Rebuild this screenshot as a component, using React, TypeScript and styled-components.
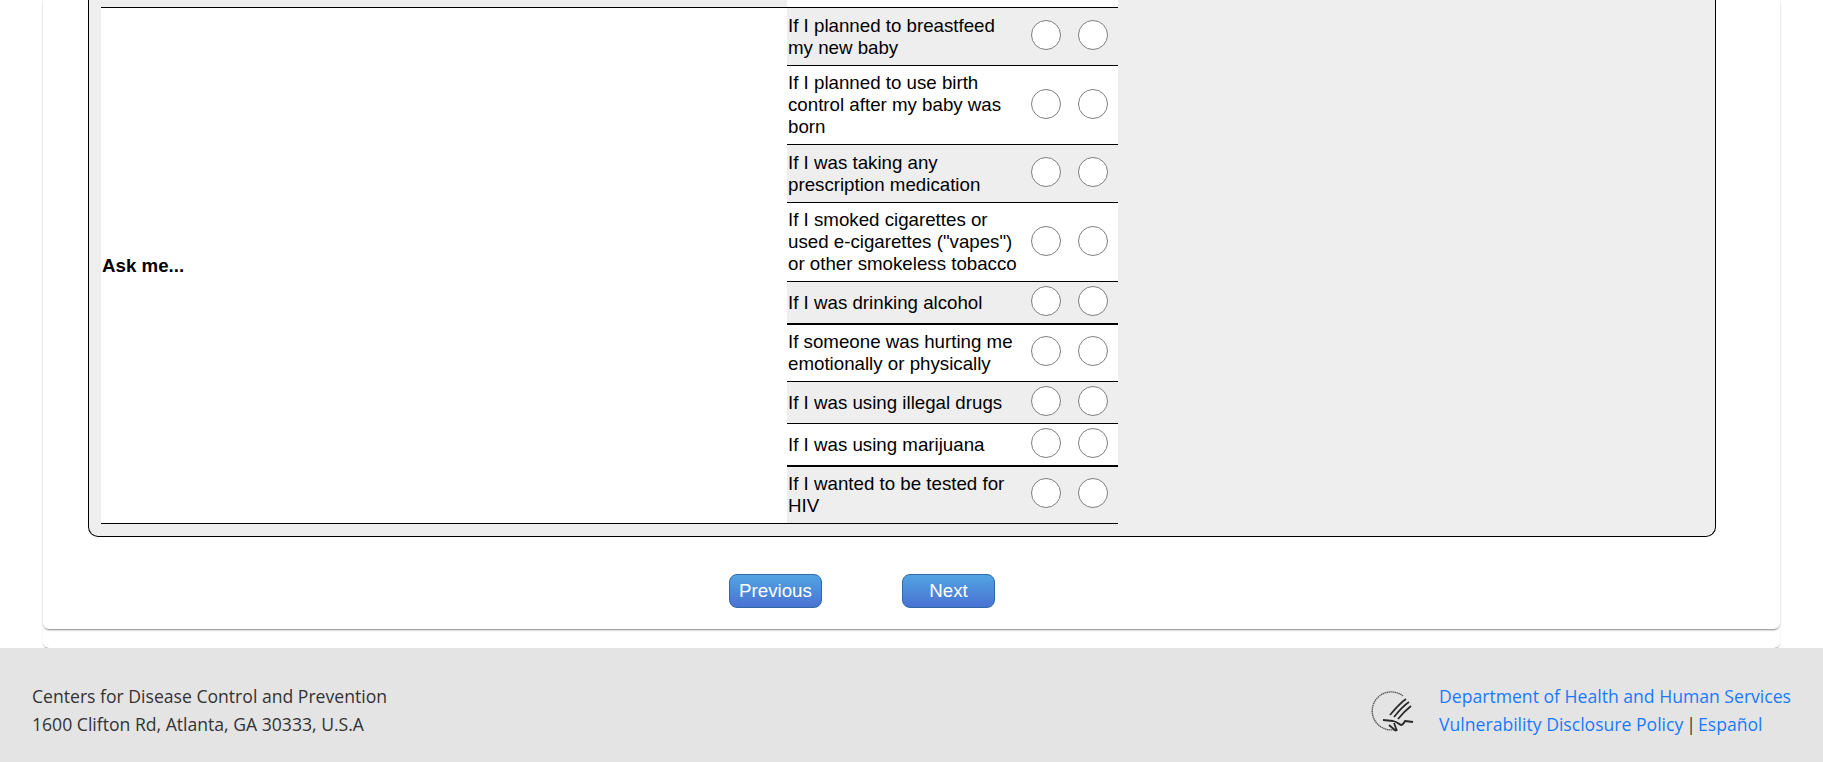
import styled, { createGlobalStyle } from "styled-components";

const GlobalStyle = createGlobalStyle`
  html, body {
    margin: 0;
    padding: 0;
    background: #fff;
    overflow: hidden;
  }
`;

const Page = styled.div`
  width: 1823px;
  height: 762px;
  display: flex;
  flex-direction: column;
  overflow: hidden;
`;
const Main = styled.main`
  height: 648px;
  padding: 0 43px;
`;
const OuterCard = styled.div`
  height: 648px;
  border-radius: 0 0 6px 6px;
  box-shadow: 0 2px 2px -1px rgba(0, 0, 0, 0.45), 0 0 1px rgba(0, 0, 0, 0.04);
`;
const InnerCard = styled.div`
  height: 629px;
  padding: 0 64px 0 45px;
  box-sizing: border-box;
  border-radius: 0 0 6px 6px;
  background: #fff;
  box-shadow: 0 2px 2px -1px rgba(0, 0, 0, 0.45), 0 0 2px rgba(0, 0, 0, 0.14);
`;
const QuestionSet = styled.div`
  padding: 0 12px 12px 12px;
  background: #eee;
  border: 1px solid #000;
  border-top: 0;
  border-radius: 0 0 10px 10px;
`;
const Table = styled.table`
  width: 1017px;
  table-layout: fixed;
  border-collapse: separate;
  border-spacing: 0;
  font: 18.72px/22px "Liberation Sans", Arial, sans-serif;
  color: #000;
`;
const PrevRowCell = styled.td<{ $shade?: boolean }>`
  height: 7px;
  padding: 0;
  background: ${(p) => (p.$shade ? "#eee" : "#fff")};
  border-bottom: 1px solid #000;
`;
const LabelCell = styled.td`
  padding: 0 1px;
  background: #fff;
  font-weight: bold;
  border-bottom: 1px solid #000;
`;
// rows are 42, 58 or 79px tall depending on how many lines the question wraps to
const rowHeights: Record<number, number> = { 1: 41, 2: 57, 3: 78 };
const ItemCell = styled.td<{ $shade: boolean; $ruled: boolean; $lines: number }>`
  height: ${(p) => rowHeights[p.$lines]}px;
  padding: 0 1px;
  background: ${(p) => (p.$shade ? "#eee" : "#fff")};
  border-bottom: 1px solid #000;
  box-shadow: ${(p) => (p.$ruled ? "inset 0 1px 0 #000" : "none")};
`;
const ChoiceCell = styled.td<{ $shade: boolean; $ruled: boolean }>`
  padding: 0;
  vertical-align: middle;
  background: ${(p) => (p.$shade ? "#eee" : "#fff")};
  border-bottom: 1px solid #000;
  box-shadow: ${(p) => (p.$ruled ? "inset 0 1px 0 #000" : "none")};
`;
const Radio = styled.input`
  appearance: none;
  display: block;
  width: 30px;
  height: 30px;
  margin: 0 0 3px 7px;
  background: #fff;
  border: 1px solid #7f7f7f;
  border-radius: 50%;
`;
const ButtonRow = styled.div`
  display: flex;
  gap: 80px;
  padding: 37px 0 0 641px;
`;
const NavButton = styled.button`
  width: 93px;
  height: 34px;
  padding: 0;
  font: 18.72px "Liberation Sans", Arial, sans-serif;
  color: #fff;
  background: linear-gradient(#52a3e2, #4a72d3);
  border: 1px solid #2f6aa5;
  border-radius: 8px;
`;
const Footer = styled.footer`
  flex: 1;
  display: flex;
  justify-content: space-between;
  align-items: flex-start;
  padding: 34px 32px 0;
  background: #e4e4e4;
  font: 17.6px/28px "Open Sans", "Noto Sans", sans-serif;
  color: #333;
`;
const FooterRight = styled.div`
  display: flex;
  align-items: flex-start;
  gap: 20px;
`;
const Logo = styled.svg`
  display: block;
  width: 60px;
  height: 60px;
  margin-top: -2px;
`;
const FooterLink = styled.a`
  color: #1a7aff;
  text-decoration: none;
`;
const Separator = styled.span`
  margin: 0 2px 0 3px;
`;

const questions = [
  { text: "If I planned to breastfeed my new baby", lines: 2 },
  { text: "If I planned to use birth control after my baby was born", lines: 3 },
  { text: "If I was taking any prescription medication", lines: 2 },
  { text: 'If I smoked cigarettes or used e-cigarettes ("vapes") or other smokeless tobacco', lines: 3 },
  { text: "If I was drinking alcohol", lines: 1 },
  { text: "If someone was hurting me emotionally or physically", lines: 2, ruled: true },
  { text: "If I was using illegal drugs", lines: 1 },
  { text: "If I was using marijuana", lines: 1 },
  { text: "If I wanted to be tested for HIV", lines: 2, ruled: true },
];

function HhsLogo() {
  return (
    <Logo viewBox="0 0 60 60" aria-hidden="true">
      <path
        d="M44 16A19 19 0 1 0 38 49"
        fill="none"
        stroke="#555"
        strokeWidth="1.4"
        strokeDasharray="1.4 0.6"
      />
      <g fill="none" stroke="#2a2a2a" strokeWidth="1.8" strokeLinejoin="round">
        <path d="M47 19C41 23 36 29 31 35" />
        <path d="M50 22C44 26 39 32 35 37" />
        <path d="M52 26C47 30 43 34 39 39" />
        <path d="M24 40L34 41C38 42 40 44 42 45C44 45 45 43 46 41L54 42" />
        <path d="M35 43L38 51" />
        <path d="M30 45L37 51" />
      </g>
    </Logo>
  );
}

export default function App() {
  return (
    <>
      <GlobalStyle />
      <Page>
        <Main>
          <OuterCard>
            <InnerCard>
              <QuestionSet>
                <Table>
                  <colgroup>
                    <col style={{ width: 686 }} />
                    <col />
                    <col style={{ width: 47 }} />
                    <col style={{ width: 47 }} />
                  </colgroup>
                  <tbody>
                    <tr>
                      <PrevRowCell $shade />
                      <PrevRowCell colSpan={3} />
                    </tr>
                    {questions.map((q, i) => (
                      <tr key={q.text}>
                        {i === 0 && <LabelCell rowSpan={questions.length}>Ask me...</LabelCell>}
                        <ItemCell $shade={i % 2 === 0} $ruled={!!q.ruled} $lines={q.lines}>{q.text}</ItemCell>
                        <ChoiceCell $shade={i % 2 === 0} $ruled={!!q.ruled}>
                          <Radio type="radio" name={`q${i}`} aria-label="Yes" />
                        </ChoiceCell>
                        <ChoiceCell $shade={i % 2 === 0} $ruled={!!q.ruled}>
                          <Radio type="radio" name={`q${i}`} aria-label="No" />
                        </ChoiceCell>
                      </tr>
                    ))}
                  </tbody>
                </Table>
              </QuestionSet>
              <ButtonRow>
                <NavButton type="button">Previous</NavButton>
                <NavButton type="button">Next</NavButton>
              </ButtonRow>
            </InnerCard>
          </OuterCard>
        </Main>
        <Footer>
          <div>
            Centers for Disease Control and Prevention
            <br />
            1600 Clifton Rd, Atlanta, GA 30333, U.S.A
          </div>
          <FooterRight>
            <HhsLogo />
            <div>
              <FooterLink href="#">Department of Health and Human Services</FooterLink>
              <br />
              <FooterLink href="#">Vulnerability Disclosure Policy</FooterLink>
              <Separator>|</Separator>
              <FooterLink href="#">Español</FooterLink>
            </div>
          </FooterRight>
        </Footer>
      </Page>
    </>
  );
}
